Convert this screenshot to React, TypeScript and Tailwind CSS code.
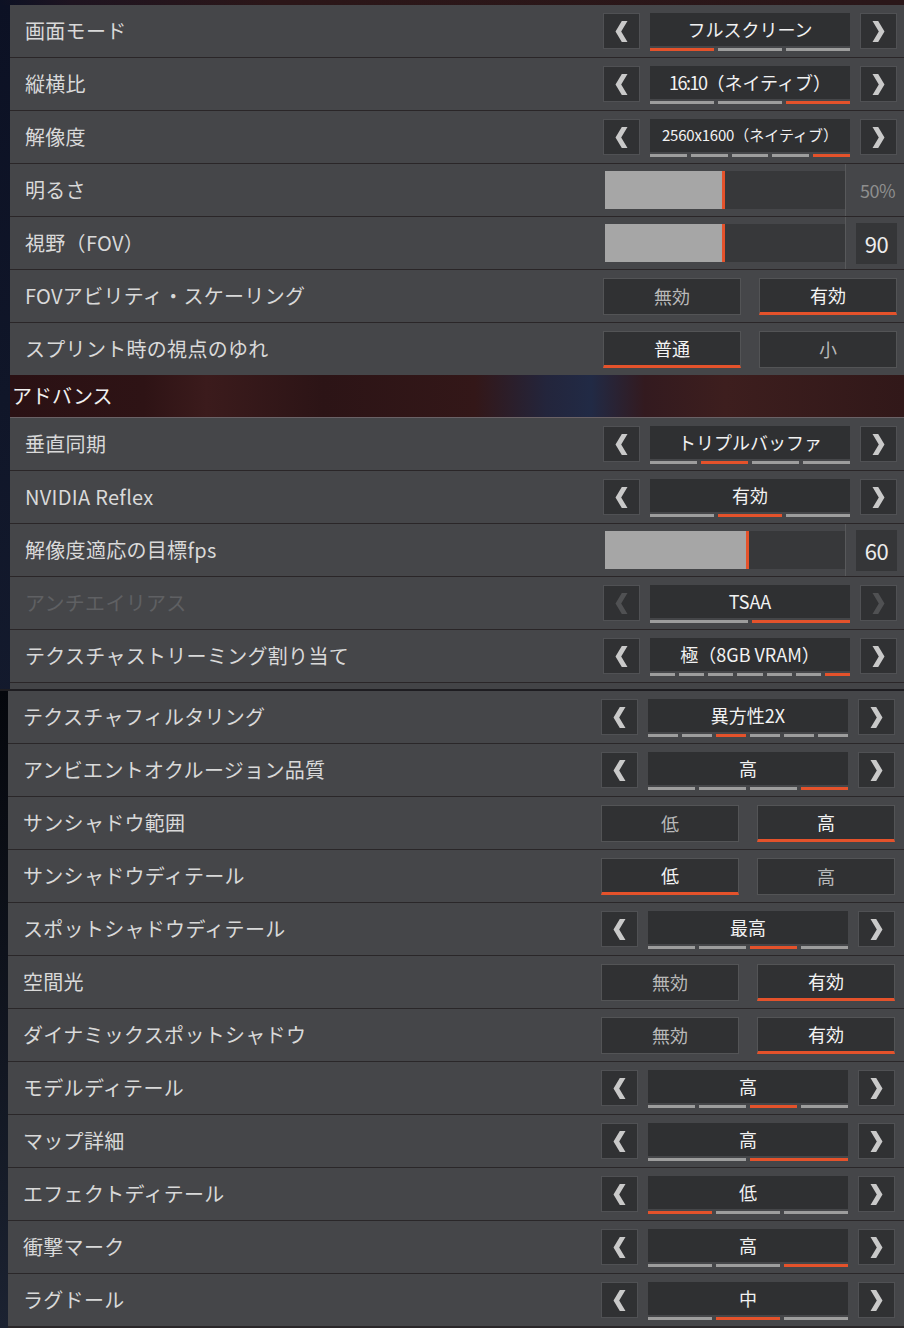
import React from 'react';

type Setting =
  | { kind: 'cycle'; label: string; value: string; count: number; active: number; disabled?: boolean; small?: boolean }
  | { kind: 'slider'; label: string; pct: number; value: string; boxed?: boolean }
  | { kind: 'toggle'; label: string; options: [string, string]; active: number };

const basic: Setting[] = [
  { kind: 'cycle', label: '画面モード', value: 'フルスクリーン', count: 3, active: 0 },
  { kind: 'cycle', label: '縦横比', value: '16:10（ネイティブ）', count: 3, active: 2 },
  { kind: 'cycle', label: '解像度', value: '2560x1600（ネイティブ）', count: 5, active: 4, small: true },
  { kind: 'slider', label: '明るさ', pct: 0.5, value: '50%' },
  { kind: 'slider', label: '視野（FOV）', pct: 0.5, value: '90', boxed: true },
  { kind: 'toggle', label: 'FOVアビリティ・スケーリング', options: ['無効', '有効'], active: 1 },
  { kind: 'toggle', label: 'スプリント時の視点のゆれ', options: ['普通', '小'], active: 0 },
];

const advanced: Setting[] = [
  { kind: 'cycle', label: '垂直同期', value: 'トリプルバッファ', count: 4, active: 1 },
  { kind: 'cycle', label: 'NVIDIA Reflex', value: '有効', count: 3, active: 1 },
  { kind: 'slider', label: '解像度適応の目標fps', pct: 0.6, value: '60', boxed: true },
  { kind: 'cycle', label: 'アンチエイリアス', value: 'TSAA', count: 2, active: 1, disabled: true },
  { kind: 'cycle', label: 'テクスチャストリーミング割り当て', value: '極（8GB VRAM）', count: 7, active: 6 },
];

const lower: Setting[] = [
  { kind: 'cycle', label: 'テクスチャフィルタリング', value: '異方性2X', count: 6, active: 2 },
  { kind: 'cycle', label: 'アンビエントオクルージョン品質', value: '高', count: 4, active: 3 },
  { kind: 'toggle', label: 'サンシャドウ範囲', options: ['低', '高'], active: 1 },
  { kind: 'toggle', label: 'サンシャドウディテール', options: ['低', '高'], active: 0 },
  { kind: 'cycle', label: 'スポットシャドウディテール', value: '最高', count: 4, active: 2 },
  { kind: 'toggle', label: '空間光', options: ['無効', '有効'], active: 1 },
  { kind: 'toggle', label: 'ダイナミックスポットシャドウ', options: ['無効', '有効'], active: 1 },
  { kind: 'cycle', label: 'モデルディテール', value: '高', count: 4, active: 2 },
  { kind: 'cycle', label: 'マップ詳細', value: '高', count: 2, active: 1 },
  { kind: 'cycle', label: 'エフェクトディテール', value: '低', count: 3, active: 0 },
  { kind: 'cycle', label: '衝撃マーク', value: '高', count: 3, active: 2 },
  { kind: 'cycle', label: 'ラグドール', value: '中', count: 3, active: 1 },
];

function ArrowBox({ dir, dim }: { dir: 'left' | 'right'; dim?: boolean }) {
  return (
    <div className="flex h-[36px] w-[37px] items-center justify-center border border-[#505154] bg-[#303133]">
      <svg width="13" height="21" viewBox="0 0 13 21" className={dim ? 'fill-[#505153]' : 'fill-[#c9c9c9]'}>
        {dir === 'left' ? (
          <polygon points="12.5,0 6.2,10.5 12.5,21 6.8,21 0.5,10.5 6.8,0" />
        ) : (
          <polygon points="0.5,0 6.8,10.5 0.5,21 6.2,21 12.5,10.5 6.2,0" />
        )}
      </svg>
    </div>
  );
}

// digit runs are drawn tighter, like the game's condensed numerals
function Value({ text, small }: { text: string; small?: boolean }) {
  const parts = text.split(/([0-9][0-9x:]*[0-9])/);
  return (
    <span className={`whitespace-nowrap ${small ? 'text-[15px]' : 'text-[18px]'}`}>
      {parts.map((p, i) =>
        i % 2 === 1 ? (
          <span key={i} className={small ? 'tracking-[-0.2px]' : 'tracking-[-1.5px]'}>
            {p}
          </span>
        ) : (
          <span key={i}>{p}</span>
        )
      )}
    </span>
  );
}

function Cycle({ s }: { s: Extract<Setting, { kind: 'cycle' }> }) {
  return (
    <div className="flex h-full items-start gap-[10px] pt-[8px]">
      <ArrowBox dir="left" dim={s.disabled} />
      <div className="flex w-[200px] flex-col gap-[2px]">
        <div className="flex h-[33px] items-center justify-center bg-[#2f3032] text-[#f2f2f2]">
          <Value text={s.value} small={s.small} />
        </div>
        <div className="flex gap-[4px]">
          {Array.from({ length: s.count }).map((_, i) => (
            <div key={i} className={`h-[3px] flex-1 ${i === s.active ? 'bg-[#e4522b]' : 'bg-[#9d9d9d]'}`} />
          ))}
        </div>
      </div>
      <ArrowBox dir="right" dim={s.disabled} />
    </div>
  );
}

function Slider({ s }: { s: Extract<Setting, { kind: 'slider' }> }) {
  return (
    <div className="flex h-full w-full items-center">
      <div className="ml-[2px] flex h-[38px] w-[240px] bg-[#37383a]">
        <div className="h-full border-r-[3px] border-[#e4522b] bg-[#a6a6a6]" style={{ width: Math.round(240 * s.pct) }} />
      </div>
      <div className="h-full w-px bg-[#58595b]" />
      {s.boxed ? (
        <div className="ml-[10px] flex h-[41px] w-[41px] items-center justify-center bg-[#353638] text-[22px] tracking-[-0.5px] text-[#ededed]">
          {s.value}
        </div>
      ) : (
        <div className="flex flex-1 justify-end pr-[2px] text-[18px] tracking-[-0.5px] text-[#8e8e8e]">{s.value}</div>
      )}
    </div>
  );
}

function Toggle({ s }: { s: Extract<Setting, { kind: 'toggle' }> }) {
  return (
    <div className="flex w-full gap-[18px]">
      {s.options.map((o, i) => (
        <div
          key={o}
          className={`flex h-[37px] w-[138px] items-center justify-center border border-[#535456] bg-[#303133] text-[18px] ${
            i === s.active ? 'border-b-[3px] border-b-[#e4522b] text-[#f4f4f4]' : 'text-[#b9b9b9]'
          }`}
        >
          {o}
        </div>
      ))}
    </div>
  );
}

function Row({ s, lowerPart }: { s: Setting; lowerPart?: boolean }) {
  const dim = s.kind === 'cycle' && s.disabled;
  return (
    <div className="flex h-[52px] items-center bg-[#454649]">
      <div className={`flex-1 pl-[15px] text-[20px] tracking-[0.3px] ${dim ? 'text-[#5f6063]' : 'text-[#d9d9d9]'}`}>
        {s.label}
      </div>
      <div className={`flex h-full w-[294px] items-center ${lowerPart ? 'mr-[9px]' : 'mr-[7px]'}`}>
        {s.kind === 'cycle' && <Cycle s={s} />}
        {s.kind === 'slider' && <Slider s={s} />}
        {s.kind === 'toggle' && <Toggle s={s} />}
      </div>
    </div>
  );
}

export default function App() {
  return (
    <div className="h-[1328px] w-[904px] overflow-hidden bg-[linear-gradient(180deg,#0c1124,#182033_90%,#1a2133)] font-['Noto_Sans_CJK_JP',sans-serif]">
      <div className="h-[5px] bg-[linear-gradient(90deg,#0c1124_0%,#1e1420_8%,#2b1618_30%,#2a1719_100%)]" />
      <div className="ml-[10px] flex flex-col">
        <div className="flex flex-col gap-px bg-[#2a2628]">
          {basic.map((s) => (
            <Row key={s.label} s={s} />
          ))}
        </div>
        <div className="flex h-[43px] items-center border-b border-[#6a6266] bg-[linear-gradient(90deg,#2a1114_0%,#2e1315_15%,#3b1b1c_22%,#2c1416_35%,#331718_52%,#23253c_60%,#212a45_65%,#331a1f_71%,#3d1e1e_80%,#311819_100%)] pl-[2px] text-[20px] text-[#f0f0f0]">
          アドバンス
        </div>
        <div className="flex flex-col gap-px bg-[#2a2628]">
          {advanced.map((s) => (
            <Row key={s.label} s={s} />
          ))}
          <div className="h-[6px] bg-[#434447]" />
        </div>
      </div>
      <div className="h-[2px] bg-[#1e1d21]" />
      <div className="bg-[linear-gradient(180deg,#05070c,#1b2231)] pl-[8px]">
        <div className="flex flex-col gap-px bg-[#2a2729] pb-[2px]">
          {lower.map((s) => (
            <Row key={s.label} s={s} lowerPart />
          ))}
        </div>
      </div>
    </div>
  );
}
